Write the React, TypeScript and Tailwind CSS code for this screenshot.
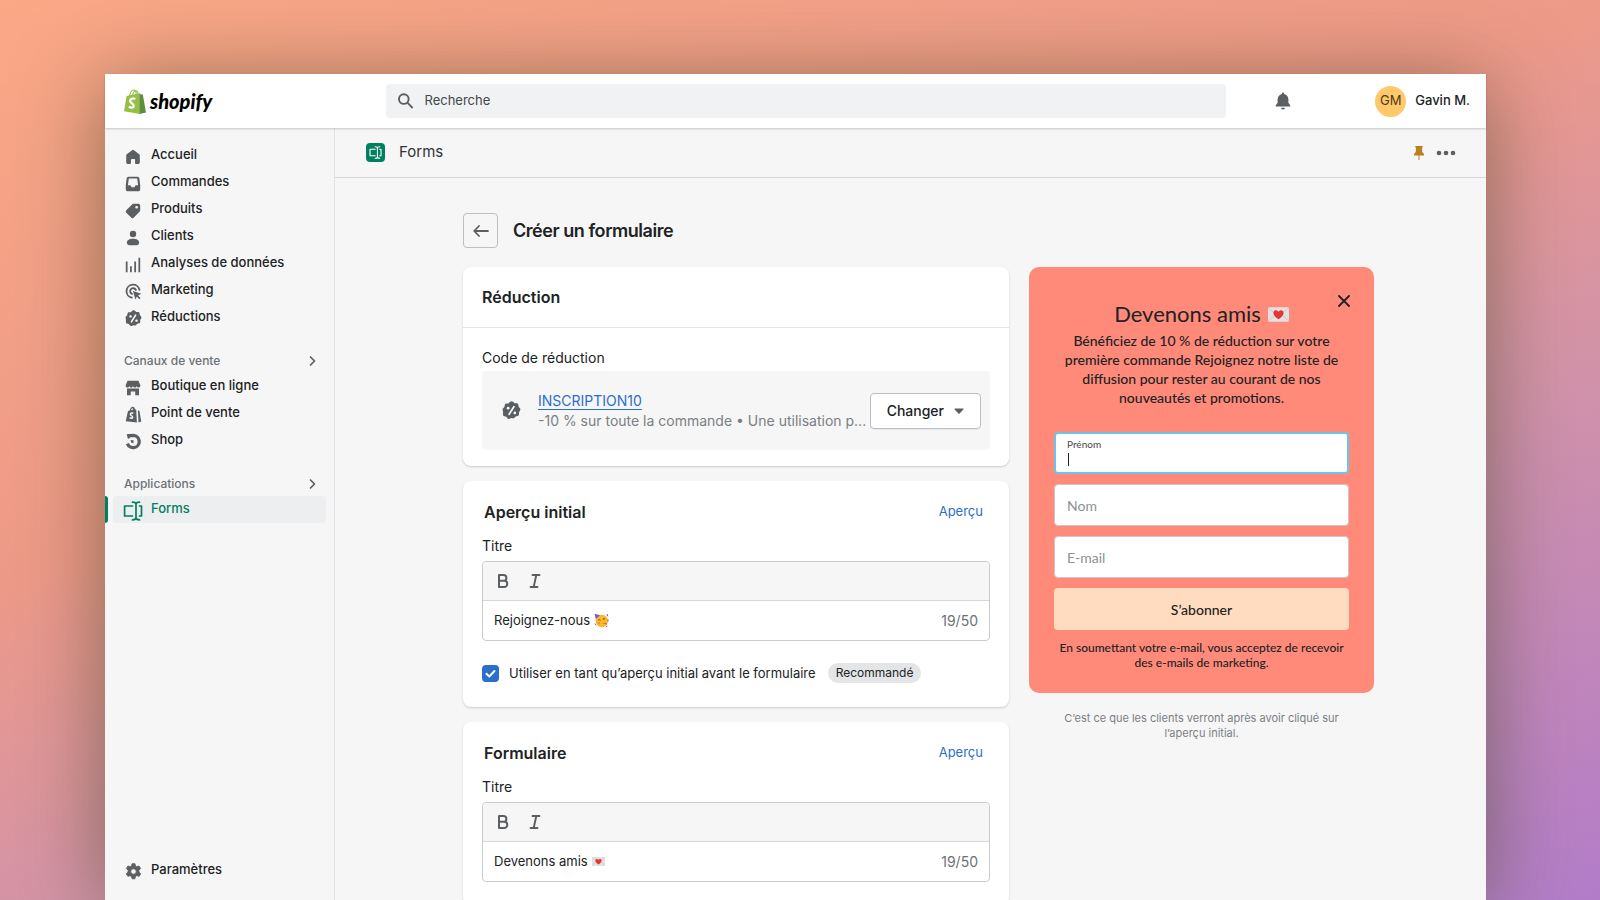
import { useState } from "react";
import type { ReactNode } from "react";

type IconProps = { className?: string };

const Svg = ({
  className = "w-4 h-4",
  children,
}: IconProps & { children: ReactNode }) => (
  <svg viewBox="0 0 20 20" fill="currentColor" className={className} aria-hidden="true">
    {children}
  </svg>
);

const HomeIcon = () => (
  <Svg>
    <path d="M8.8 1.5a2 2 0 0 1 2.4 0l6.6 5.2c.5.4.7.9.7 1.5V17c0 1-.8 1.8-1.8 1.8h-3.2c-.5 0-.9-.4-.9-.9v-4.6c0-.5-.4-.9-.9-.9H8.300c-.5 0-.9.4-.9.9v4.600c0 .5-.4.9-.9.9H3.300c-1 0-1.800-.8-1.800-1.800V8.200c0-.6.2-1.100.7-1.500z" />
  </Svg>
);

const OrdersIcon = () => (
  <Svg>
    <path
      fillRule="evenodd"
      d="M4.500 1h11A2.500 2.500 0 0 1 18 3.200l1 8.300V17a2 2 0 0 1-2 2H3a2 2 0 0 1-2-2v-5.500l1-8.300A2.500 2.500 0 0 1 4.500 1zm.3 2L3.600 11.500h2.600c.5 0 .8.200 1 .6l.6 1.200c.2.4.6.7 1 .7h2.400c.4 0 .8-.3 1-.7l.6-1.200c.2-.4.5-.6 1-.6h2.600L15.200 3z"
    />
  </Svg>
);

const TagIcon = () => (
  <Svg>
    <path
      fillRule="evenodd"
      d="M10.600 1H17a2 2 0 0 1 2 2v6.200c0 .6-.2 1.100-.6 1.500l-7.600 7.700a2 2 0 0 1-2.800 0l-6.400-6.300a2 2 0 0 1 0-2.900l7.500-7.600c.4-.4.9-.6 1.500-.6zM14.500 7a1.700 1.700 0 1 0 0-3.400 1.700 1.700 0 0 0 0 3.400z"
    />
  </Svg>
);

const CustomerIcon = () => (
  <Svg>
    <circle cx="10" cy="5" r="4" />
    <path d="M10 11c-4.300 0-7.700 2-7.700 4.700 0 1.900 1.300 3.300 3.200 3.300h9c1.900 0 3.200-1.400 3.200-3.300C17.700 13 14.300 11 10 11z" />
  </Svg>
);

const AnalyticsIcon = () => (
  <Svg>
    <path d="M1 5.500h2.200V19H1zM6.300 11.500h2.200V19H6.300zM11.600 5.500h2.200V19h-2.200zM16.800 1H19v18h-2.200z" />
  </Svg>
);

const MarketingIcon = () => (
  <Svg className="w-[17px] h-[17px]">
    <path
      d="M17 8A7.700 7.700 0 1 0 8 17.200"
      fill="none"
      stroke="currentColor"
      strokeWidth="2.200"
      strokeLinecap="round"
    />
    <path
      d="M12.800 8.200a3.500 3.500 0 1 0-4.600 4.600"
      fill="none"
      stroke="currentColor"
      strokeWidth="2.200"
      strokeLinecap="round"
    />
    <path d="M9.300 9.300l10 3.400-4 2 2.900 3-1.400 1.300-2.800-3-1.700 3.400z" />
  </Svg>
);

const DiscountIcon = ({ className = "w-[17px] h-[17px]" }: IconProps) => (
  <Svg className={className}>
    <path d="M11.600.8l1.700 1.500 2.200.1c.8 0 1.500.6 1.600 1.400l.4 2.200 1.400 1.700c.5.6.6 1.500.1 2.200l-1.100 1.900v2.200c0 .8-.6 1.600-1.400 1.700l-2.100.5-1.600 1.600c-.6.6-1.500.7-2.200.2L10 18l-1.900.8c-.8.3-1.600.1-2.100-.5l-1.500-1.700-2.100-.6c-.8-.2-1.400-.9-1.300-1.700v-2.300L.9 10.100c-.4-.7-.4-1.500.1-2.200l1.500-1.600.5-2.200c.2-.8.9-1.400 1.700-1.400l2.100-.2L8.500.8c.9-.7 2.200-.7 3.100 0z" />
    <path d="M12.500 6L7.500 14" stroke="#fff" strokeWidth="1.800" strokeLinecap="round" />
    <circle cx="6.500" cy="7.500" r="1.400" fill="#fff" />
    <circle cx="13.500" cy="12.500" r="1.400" fill="#fff" />
  </Svg>
);

const StoreIcon = () => (
  <Svg>
    <path d="M3.200 1h13.600l2.400 5.500v.7c0 1.300-1 2.200-2.300 2.200s-2.300-.9-2.300-2.200c0 1.300-1 2.200-2.300 2.200S10 8.500 10 7.200c0 1.300-1 2.200-2.300 2.200S5.400 8.500 5.400 7.200c0 1.300-1 2.200-2.300 2.200S.8 8.500.8 7.200v-.7z" />
    <path d="M2.500 10.500h15V19h-4.700v-4.500H7.200V19H2.500z" />
  </Svg>
);

const PointOfSaleIcon = () => (
  <Svg className="w-[17px] h-[17px]">
    <path
      fillRule="evenodd"
      d="M3.500 6l2-.6C6 2.600 7.600.8 9.300.8c1.300 0 2.200 1 2.500 3l1.400.5L14 19.400.9 17.800zm3.400-1l2.900-.8c-.2-1-.4-1.500-.8-1.600-.8.100-1.700 1-2.100 2.400z"
    />
    <path
      d="M9.800 8.500c-2.200-.9-3.600.1-3.400 1.400.2 1.500 2.700 1.700 2.600 3.300-.1 1.300-1.700 1.800-3.600.6"
      fill="none"
      stroke="#f6f6f7"
      strokeWidth="1.700"
    />
    <path d="M15.200 4.800l1.900 1.800 2 11.700-3.200 1z" />
  </Svg>
);

const ShopIcon = () => (
  <Svg className="w-[17px] h-[17px]">
    <path
      d="M3.500 3.400C5.500 2.900 8 2.800 10 2.800a7.200 7.200 0 1 1-7.200 9.700"
      fill="none"
      stroke="currentColor"
      strokeWidth="3.800"
    />
    <path d="M2 1.600l4-.4v4.300L3.500 7zM6.500 8.300l3.500.2v3.600l-2.500-.6z" />
  </Svg>
);

const SettingsIcon = () => (
  <Svg className="w-[17px] h-[17px]">
    <path
      fillRule="evenodd"
      d="M8.300.8h3.400l.6 2.700 1.500.8 2.700-.8 1.900 3-2 2v2.200l2.100 2-1.900 3-2.800-.8-1.500.9-.6 2.800H8.300l-.7-2.800-1.500-.9-2.700.8-1.900-3 2.100-2V8.500l-2-2 1.900-3 2.700.8 1.500-.8zM10 13.200A3.200 3.200 0 1 0 10 6.800a3.200 3.200 0 0 0 0 6.400z"
      stroke="currentColor"
      strokeWidth="1"
      strokeLinejoin="round"
    />
  </Svg>
);

const FormsIcon = ({ className = "w-5 h-5" }: IconProps) => (
  <svg
    viewBox="0 0 20 20"
    fill="none"
    stroke="currentColor"
    strokeWidth="1.700"
    strokeLinecap="round"
    strokeLinejoin="round"
    className={className}
    aria-hidden="true"
  >
    <path d="M9.500 5H1.600v10h7.900" />
    <path d="M16.500 5h2v10h-2" />
    <path d="M9.500 1.200c2 0 3.500.5 3.500 2v13.600c0 1.500-1.500 2-3.500 2M16.500 1.200c-2 0-3.500.5-3.500 2M16.500 18.800c-2 0-3.500-.5-3.500-2" />
  </svg>
);

const ChevronIcon = () => (
  <svg viewBox="0 0 10 12" className="w-2.5 h-3" fill="none" stroke="#5c5f62" strokeWidth="1.700" aria-hidden="true">
    <path d="M2.500 2L6.500 6l-4 4" strokeLinecap="round" strokeLinejoin="round" />
  </svg>
);

const ShopifyBag = () => (
  <svg viewBox="0 0 22 25" className="w-[22px] h-[25px]" aria-hidden="true">
    <path
      d="M5.500 7C6.200 3.600 8 1 9.900 1c1.500 0 2.300 1.800 2.400 5M8.500 6C9.200 3.300 10.600 1.600 12 1.700c1.300.1 2 1.700 2.300 3.600"
      fill="none"
      stroke="#95bf47"
      strokeWidth="1.100"
    />
    <path d="M2.600 6.900L15.300 4.300l.7 20.700L0 22.200z" fill="#95bf47" />
    <path d="M15.300 4.300l1.200.9 2.300.3L22 23.600 15.600 25z" fill="#5e8e3e" />
    <path
      d="M11.300 10C8.500 8.500 6 10 6.200 12.200c.2 2.200 3.600 2.500 3.500 4.700-.1 2-2.700 2.300-4.800.7"
      fill="none"
      stroke="#fff"
      strokeWidth="2.300"
    />
  </svg>
);

const LoveLetter = ({ className = "w-[13px] h-[9px]" }: IconProps) => (
  <svg viewBox="0 0 22 15" className={className} role="img" aria-label="lettre d'amour">
    <rect width="22" height="15" rx="1" fill="#e3e1e1" />
    <path d="M0 14.500L8.500 7M22 14.500L13.500 7M0 .5l11 9 11-9" fill="none" stroke="#c3c0c1" strokeWidth=".8" />
    <path
      d="M11 12.500C7.500 10 5.700 8 5.700 5.800c0-1.600 1.100-2.700 2.500-2.700 1.200 0 2.200.6 2.800 1.600.6-1 1.600-1.600 2.800-1.600 1.400 0 2.500 1.100 2.500 2.700 0 2.200-1.800 4.200-5.300 6.700z"
      fill="#e8352f"
    />
  </svg>
);

const PartyFace = () => (
  <svg viewBox="0 0 15 15" className="w-[15px] h-[15px]" role="img" aria-label="visage festif">
    <circle cx="7.800" cy="8" r="6.200" fill="#fbb92a" />
    <path d="M.5.8l5.500 1.400L1.800 6z" fill="#7e57c2" />
    <path d="M4.200 7.300q1.200-1.500 2.300 0M8.800 6.300q1.200-1.500 2.300 0" fill="none" stroke="#5d4037" strokeWidth="1" />
    <path d="M8 10.200l4.500-.5.500 2z" fill="#ef6c00" />
    <circle cx="4.800" cy="10.200" r="1.200" fill="#f4845f" />
    <path d="M13 1l.8 2.300M14 6.500v2M1 10.500l1 1.800M11.800 13.800l1.500-.5" stroke="#7e57c2" strokeWidth="1" />
  </svg>
);

const mainLinks = [
  { label: "Accueil", Icon: HomeIcon },
  { label: "Commandes", Icon: OrdersIcon },
  { label: "Produits", Icon: TagIcon },
  { label: "Clients", Icon: CustomerIcon },
  { label: "Analyses de données", Icon: AnalyticsIcon },
  { label: "Marketing", Icon: MarketingIcon },
  { label: "Réductions", Icon: DiscountIcon },
];

const channelLinks = [
  { label: "Boutique en ligne", Icon: StoreIcon },
  { label: "Point de vente", Icon: PointOfSaleIcon },
  { label: "Shop", Icon: ShopIcon },
];

type NavItemProps = {
  label: string;
  Icon: (props: IconProps) => ReactNode;
  active?: boolean;
};

const NavItem = ({ label, Icon, active }: NavItemProps) => (
  <li className="relative px-2">
    {active && <span className="absolute left-0 inset-y-0 w-[3px] rounded-r bg-[#008060]" />}
    <a
      href="#"
      aria-current={active ? "page" : undefined}
      className={
        active
          ? "flex h-[27px] items-center gap-2 rounded bg-[#edeeef] pl-[10px] font-medium text-[#008060]"
          : "flex h-[27px] items-center gap-2 rounded pl-[10px] font-medium text-[#202223]"
      }
    >
      <span
        className={
          active
            ? "flex w-5 justify-center pt-0.5 text-[#008060]"
            : "flex w-5 justify-center pt-0.5 text-[#5c5f62]"
        }
      >
        <Icon />
      </span>
      <span className="pb-px">{label}</span>
    </a>
  </li>
);

const NavHeading = ({ children }: { children: ReactNode }) => (
  <button
    type="button"
    className="mt-[18px] flex h-6 w-full items-center justify-between pr-4 pl-[19px] text-xs font-medium text-[#6d7175]"
  >
    {children}
    <ChevronIcon />
  </button>
);

const Sidebar = () => (
  <nav className="flex w-[230px] shrink-0 flex-col border-r border-[#e1e3e5] pt-[14px] pb-4 text-[13px]">
    <ul>
      {mainLinks.map((link) => (
        <NavItem key={link.label} {...link} />
      ))}
    </ul>
    <NavHeading>Canaux de vente</NavHeading>
    <ul>
      {channelLinks.map((link) => (
        <NavItem key={link.label} {...link} />
      ))}
    </ul>
    <NavHeading>Applications</NavHeading>
    <ul>
      <NavItem label="Forms" Icon={FormsIcon} active />
    </ul>
    <ul className="mt-auto">
      <NavItem label="Paramètres" Icon={SettingsIcon} />
    </ul>
  </nav>
);

const TopBar = () => (
  <header className="relative flex h-[54px] shrink-0 items-center bg-white pr-4 pl-[19px] shadow-[0_1px_2px_rgba(0,0,0,0.2)]">
    <a href="#" className="flex w-[262px] items-center gap-1">
      <ShopifyBag />
      <span className="font-[Lato,sans-serif] text-[20px] leading-6 font-black text-black italic">
        shopify
      </span>
    </a>
    <label className="flex h-[34px] min-w-0 flex-1 items-center gap-[11px] rounded bg-[#f1f2f3] px-3">
      <svg viewBox="0 0 16 16" className="h-4 w-4" fill="none" stroke="#5c5f62" strokeWidth="2" aria-hidden="true">
        <circle cx="6" cy="6" r="5" />
        <path d="M9.700 9.700l5.500 5.500" />
      </svg>
      <input
        type="search"
        aria-label="Recherche"
        placeholder="Recherche"
        className="w-full bg-transparent text-[13px] outline-none placeholder:text-[#44474a]"
      />
    </label>
    <div className="flex w-[244px] items-center justify-between pl-12">
      <button type="button" aria-label="Notifications" className="text-[#5c5f62]">
        <Svg className="h-5 w-[18px]">
          <path d="M10 .5c.7 0 1.200.5 1.200 1.200v.6c3 .6 4.800 3 4.800 6V12l2 2.600V16H2v-1.400L4 12V8.300c0-3 1.800-5.400 4.800-6v-.6C8.800 1 9.300.500 10 .500zM7.800 17.500h4.400c-.2 1.200-1.100 2-2.200 2s-2-.8-2.200-2z" />
        </Svg>
      </button>
      <button type="button" className="flex items-center gap-[9px] text-[13px] font-medium text-[#202223]">
        <span className="flex h-[31px] w-[31px] items-center justify-center rounded-full bg-[#ffc96b] font-normal text-[#4f3b12]">
          GM
        </span>
        Gavin M.
      </button>
    </div>
  </header>
);

const AppBar = () => (
  <div className="flex h-[50px] items-center justify-between border-b border-[#d5d7d9] pr-[30px] pl-[31px]">
    <div className="flex items-center gap-[14px]">
      <span className="flex h-[19px] w-[19px] items-center justify-center rounded bg-[#008060] text-white">
        <FormsIcon className="h-[13px] w-[13px]" />
      </span>
      <h2 className="text-[15px] text-[#303335]">Forms</h2>
    </div>
    <div className="flex items-center gap-3">
      <button type="button" aria-label="Épingler" className="text-[#b98020]">
        <svg viewBox="0 0 10 14" className="h-[14px] w-[10px]" fill="currentColor" aria-hidden="true">
          <path d="M1.300 0h7.400v1.600H8L8.200 6l1.800 2v1.500H5.500V14h-1V9.500H0V8l1.800-2L2 1.600h-.7z" />
        </svg>
      </button>
      <button type="button" aria-label="Plus d'actions" className="text-[#5c5f62]">
        <svg viewBox="0 0 20 6" className="h-[6px] w-[20px]" fill="currentColor" aria-hidden="true">
          <circle cx="3" cy="3" r="2.300" />
          <circle cx="10" cy="3" r="2.300" />
          <circle cx="17" cy="3" r="2.300" />
        </svg>
      </button>
    </div>
  </div>
);

const DiscountCard = () => (
  <section className="rounded-lg bg-white shadow-[0_1px_2px_rgba(0,0,0,0.18)]">
    <h3 className="border-b border-[#e1e3e5] px-[19px] py-[19px] text-base leading-[22px] font-semibold">
      Réduction
    </h3>
    <div className="px-[19px] pt-5 pb-4">
      <p className="text-[14px] leading-5">Code de réduction</p>
      <div className="mt-[3px] flex h-[79px] items-center rounded bg-[#f6f6f7] pr-[9px] pl-5">
        <DiscountIcon className="h-[19px] w-[19px] shrink-0 text-[#5c5f62]" />
        <div className="ml-[17px] min-w-0 flex-1 text-[14px] leading-5">
          <a href="#" className="text-[#2c6ecb] underline underline-offset-3">
            INSCRIPTION10
          </a>
          <p className="whitespace-nowrap text-[#7b7f83]">
            -10 % sur toute la commande • Une utilisation p...
          </p>
        </div>
        <button
          type="button"
          className="ml-[3px] flex h-9 shrink-0 items-center gap-[10px] rounded border border-[#babfc3] bg-white px-4 text-[14px] font-medium shadow-[0_1px_0_rgba(0,0,0,0.05)]"
        >
          Changer
          <svg viewBox="0 0 10 6" className="h-[6px] w-[10px]" fill="#5c5f62" aria-hidden="true">
            <path d="M1 .5h8c.5 0 .7.5.4.9L5.600 5.600a.8.8 0 0 1-1.200 0L.6 1.400C.3 1 .5.500 1 .500z" />
          </svg>
        </button>
      </div>
    </div>
  </section>
);

type EditorCardProps = {
  id: string;
  heading: string;
  value: string;
  emoji: ReactNode;
  children?: ReactNode;
};

const EditorCard = ({ id, heading, value, emoji, children }: EditorCardProps) => (
  <section className="rounded-lg bg-white px-[19px] pt-5 pb-[23px] shadow-[0_1px_2px_rgba(0,0,0,0.18)]">
    <div className="flex items-center justify-between pr-[7px] pl-0.5">
      <h3 className="text-base leading-[22px] font-semibold">{heading}</h3>
      <button type="button" className="text-[13px] text-[#2c6ecb]">
        Aperçu
      </button>
    </div>
    <p id={id} className="mt-[13px] text-[14px] leading-5">
      Titre
    </p>
    <div className="mt-[5px] rounded border border-[#c9cccf]">
      <div className="flex h-[39px] items-center gap-5 rounded-t border-b border-[#d5d7d9] bg-[#f6f6f7] px-[14px] text-[#5c5f62]">
        <button type="button" aria-label="Gras">
          <svg viewBox="0 0 12 14" className="h-[14px] w-3" fill="none" stroke="currentColor" strokeWidth="2" aria-hidden="true">
            <path d="M2 1h4.500a2.900 2.900 0 0 1 0 5.800H2zM2 6.800h5.200a3.100 3.100 0 0 1 0 6.200H2z" strokeLinejoin="round" />
          </svg>
        </button>
        <button type="button" aria-label="Italique">
          <svg viewBox="0 0 12 14" className="h-[14px] w-3" fill="none" stroke="currentColor" strokeWidth="1.900" aria-hidden="true">
            <path d="M3.500 1h7M1.500 13h7M7.300 1L4.700 13" strokeLinecap="round" />
          </svg>
        </button>
      </div>
      <div className="flex h-[39px] items-center justify-between px-[11px] text-[13px]">
        <div
          role="textbox"
          aria-labelledby={id}
          contentEditable
          suppressContentEditableWarning
          className="flex flex-1 items-center gap-1 outline-none"
        >
          {value}
          {emoji}
        </div>
        <span className="text-[14px] text-[#6d7175]">19/50</span>
      </div>
    </div>
    {children}
  </section>
);

const TeaserOption = () => {
  const [checked, setChecked] = useState(true);

  return (
    <div className="mt-[21px] flex items-center gap-3">
      <label className="flex items-center gap-[10px] text-[13px] leading-[22px]">
        <span className="relative h-[17px] w-[17px]">
          <input
            type="checkbox"
            checked={checked}
            onChange={() => setChecked(!checked)}
            className="block h-[17px] w-[17px] appearance-none rounded border-2 border-[#8c9196] checked:border-[#2c6ecb] checked:bg-[#2c6ecb]"
          />
          {checked && (
            <svg viewBox="0 0 17 17" className="pointer-events-none absolute inset-0" fill="none" stroke="#fff" strokeWidth="2" aria-hidden="true">
              <path d="M4.500 8.800l2.800 2.700 5.200-5.500" strokeLinecap="round" strokeLinejoin="round" />
            </svg>
          )}
        </span>
        Utiliser en tant qu’aperçu initial avant le formulaire
      </label>
      <span className="rounded-full bg-[#e4e5e7] px-2 text-xs leading-5">Recommandé</span>
    </div>
  );
};

const FormPreview = () => (
  <aside className="w-[345px] shrink-0">
    <form
      className="relative rounded-[10px] bg-[#ff8a7a] px-[25px] pt-8 pb-[23px] text-center font-[Lato,sans-serif] text-[#202223]"
      onSubmit={(e) => e.preventDefault()}
    >
      <button type="button" aria-label="Fermer" className="absolute top-7 right-6">
        <svg viewBox="0 0 12 12" className="h-3 w-3" fill="none" stroke="currentColor" strokeWidth="1.800" aria-hidden="true">
          <path d="M1 1l10 10M11 1L1 11" strokeLinecap="round" />
        </svg>
      </button>
      <h3 className="flex items-center justify-center gap-[7px] text-[22px] leading-[30px]">
        Devenons amis <LoveLetter className="h-[15px] w-[21px]" />
      </h3>
      <p className="mt-0.5 px-2 text-[14px] leading-[19px] font-medium">
        Bénéficiez de 10 % de réduction sur votre première commande Rejoignez notre liste de
        diffusion pour rester au courant de nos nouveautés et promotions.
      </p>
      <div className="mt-[25px] flex flex-col gap-[10px] text-left text-[14px]">
        <label className="flex h-[42px] flex-col rounded border-2 border-[#6cc4ea] bg-white px-[11px] pt-1 text-[10px] leading-3 text-[#44474a]">
          Prénom
          <span className="relative flex h-[18px] items-center">
            <input type="text" className="w-full text-[14px] outline-none" />
            <span className="absolute left-px h-[13px] w-px bg-[#202223]" />
          </span>
        </label>
        <input
          type="text"
          aria-label="Nom"
          placeholder="Nom"
          className="h-[42px] rounded border border-[#d2c4c4] bg-white px-3 placeholder:text-[#8c9196]"
        />
        <input
          type="email"
          aria-label="E-mail"
          placeholder="E-mail"
          className="h-[42px] rounded border border-[#d2c4c4] bg-white px-3 placeholder:text-[#8c9196]"
        />
        <button type="submit" className="h-[42px] rounded bg-[#ffdbbf] font-medium">
          S’abonner
        </button>
      </div>
      <p className="mt-[10px] text-xs leading-[15px] font-medium">
        En soumettant votre e-mail, vous acceptez de recevoir des e-mails de marketing.
      </p>
    </form>
    <p className="mt-[18px] px-7 text-center text-[11px] leading-[15px] text-[#7b7f83]">
      C’est ce que les clients verront après avoir cliqué sur l’aperçu initial.
    </p>
  </aside>
);

const App = () => (
  <div className="h-screen overflow-hidden bg-[linear-gradient(160deg,#faa886_0%,#ee9a89_40%,#d494a8_62%,#b37dca_100%)] pt-[74px] pr-[114px] pl-[105px] font-[Inter,sans-serif] text-[#202223]">
    <div className="flex h-full flex-col bg-[#f6f6f7] shadow-[0_10px_80px_rgba(70,70,40,0.6)]">
      <TopBar />
      <div className="flex min-h-0 flex-1">
        <Sidebar />
        <main className="min-w-0 flex-1 overflow-hidden">
          <AppBar />
          <div className="pt-[35px] pr-[112px] pl-32">
            <div className="flex items-center gap-[15px]">
              <button
                type="button"
                aria-label="Retour"
                className="flex h-[35px] w-[35px] items-center justify-center rounded border border-[#babfc3]"
              >
                <svg viewBox="0 0 16 12" className="h-3 w-4" fill="none" stroke="#5c5f62" strokeWidth="1.800" aria-hidden="true">
                  <path d="M15 6H1.500M6 1L1.200 6 6 11" strokeLinecap="round" strokeLinejoin="round" />
                </svg>
              </button>
              <h1 className="text-lg font-semibold tracking-tight">Créer un formulaire</h1>
            </div>
            <div className="mt-[19px] flex items-start gap-5">
              <div className="flex min-w-0 flex-1 flex-col gap-[15px]">
                <DiscountCard />
                <EditorCard
                  id="teaser-title"
                  heading="Aperçu initial"
                  value="Rejoignez-nous"
                  emoji={<PartyFace />}
                >
                  <TeaserOption />
                </EditorCard>
                <EditorCard
                  id="form-title"
                  heading="Formulaire"
                  value="Devenons amis"
                  emoji={<LoveLetter />}
                />
              </div>
              <FormPreview />
            </div>
          </div>
        </main>
      </div>
    </div>
  </div>
);

export default App;
